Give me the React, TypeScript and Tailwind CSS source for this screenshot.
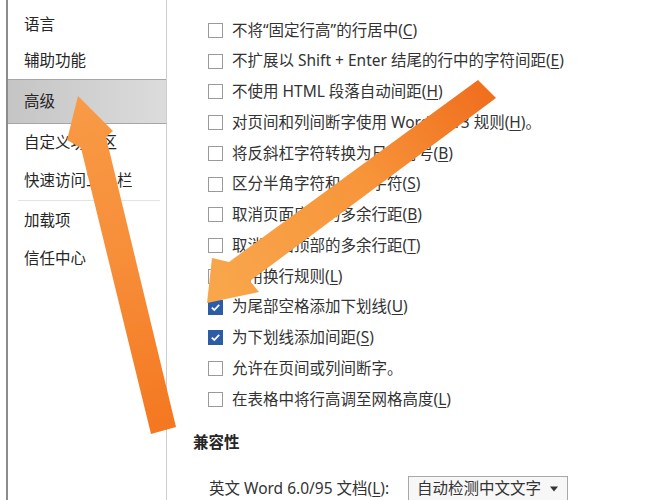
import React from "react";

const FONT = '"Noto Sans", "Noto Sans CJK SC", sans-serif';

type Row = { pre: string; key?: string; post?: string; checked?: boolean };

const rows: Row[] = [
  { pre: "不将“固定行高”的行居中(", key: "C", post: ")" },
  { pre: "不扩展以 Shift + Enter 结尾的行中的字符间距(", key: "E", post: ")" },
  { pre: "不使用 HTML 段落自动间距(", key: "H", post: ")" },
  { pre: "对页间和列间断字使用 Word 2013 规则(", key: "H", post: ")。" },
  { pre: "将反斜杠字符转换为日元符号(", key: "B", post: ")" },
  { pre: "区分半角字符和全角字符(", key: "S", post: ")" },
  { pre: "取消页面底部的多余行距(", key: "B", post: ")" },
  { pre: "取消页面顶部的多余行距(", key: "T", post: ")" },
  { pre: "使用换行规则(", key: "L", post: ")" },
  { pre: "为尾部空格添加下划线(", key: "U", post: ")", checked: true },
  { pre: "为下划线添加间距(", key: "S", post: ")", checked: true },
  { pre: "允许在页间或列间断字。" },
  { pre: "在表格中将行高调至网格高度(", key: "L", post: ")" },
];

function Checkbox({ checked }: { checked?: boolean }) {
  if (checked) {
    return (
      <div className="w-[15px] h-[15px] shrink-0 bg-[#2d5ca6] border border-[#2d5ca6] flex items-center justify-center">
        <svg width="11" height="11" viewBox="0 0 11 11">
          <path d="M1.8 5.6 L4.3 8 L9.2 2.8" fill="none" stroke="#ffffff" strokeWidth="1.8" />
        </svg>
      </div>
    );
  }
  return <div className="w-[15px] h-[15px] shrink-0 bg-white border border-[#9a9a9a]" />;
}

function SideItem({ label, h, selected }: { label: string; h: string; selected?: boolean }) {
  return (
    <div
      className={
        selected
          ? `${h} flex items-center pl-[16px] bg-gradient-to-r from-[#c5c5c5] to-[#dcdcdc] border-y border-[#a6a6a6]`
          : `${h} flex items-center pl-[16px]`
      }
    >
      <span className="text-[15.5px] text-[#262626] leading-none">{label}</span>
    </div>
  );
}

export default function App() {
  return (
    <div
      className="relative w-[655px] h-[500px] overflow-hidden bg-white flex"
      style={{ fontFamily: FONT }}
    >
      <div className="w-[6px] shrink-0" />
      <div className="w-[2px] shrink-0 bg-[#8c8c8c]" />
      <div className="w-[159px] shrink-0 border-r border-[#cdcdcd] flex flex-col pt-[7px]">
        <SideItem label="语言" h="h-[36px]" />
        <SideItem label="辅助功能" h="h-[36px]" />
        <SideItem label="高级" h="h-[45px]" selected />
        <SideItem label="自定义功能区" h="h-[38px]" />
        <SideItem label="快速访问工具栏" h="h-[38px]" />
        <div className="h-px bg-[#e3e3e3] ml-[10px] mr-[6px]" />
        <SideItem label="加载项" h="h-[40px]" />
        <SideItem label="信任中心" h="h-[36px]" />
      </div>
      <div className="flex-1 flex flex-col pl-[26px]">
        <div className="mt-[7px] h-px bg-[#ececec]" />
        <div className="mt-[8px] flex flex-col">
          {rows.map((r, i) => (
            <div key={i} className="h-[30.75px] flex items-center pl-[15px] gap-[9px]">
              <Checkbox checked={r.checked} />
              <span className="text-[15.5px] text-[#333333] whitespace-nowrap leading-none">
                {r.pre}
                {r.key && <span className="underline underline-offset-2">{r.key}</span>}
                {r.post}
              </span>
            </div>
          ))}
        </div>
        <div className="mt-[17px] h-[22px] flex items-center">
          <span className="text-[15.5px] font-bold text-[#262626]">兼容性</span>
        </div>
        <div className="mt-[11px] h-px bg-[#e3e3e3]" />
        <div className="mt-[11px] h-[26px] flex items-center pl-[16px]">
          <span className="w-[199px] shrink-0 text-[15.5px] text-[#333333] whitespace-nowrap">
            英文 Word 6.0/95 文档(<span className="underline underline-offset-2">L</span>):
          </span>
          <div className="w-[160px] h-[26px] shrink-0 border border-[#a8a8a8] bg-[#f7f7f7] flex items-center pl-[8px] pr-[8px] justify-between">
            <span className="text-[15.5px] text-[#333333] whitespace-nowrap">自动检测中文文字</span>
            <svg width="10" height="6" viewBox="0 0 10 6">
              <path d="M1 0.5 L9 0.5 L5 5.5 Z" fill="#333333" />
            </svg>
          </div>
        </div>
      </div>

      <svg
        className="absolute left-0 top-0 pointer-events-none"
        width="655"
        height="500"
        viewBox="0 0 655 500"
      >
        <defs>
          <linearGradient id="g1" gradientUnits="userSpaceOnUse" x1="163" y1="432" x2="80" y2="100">
            <stop offset="0" stopColor="#f47720" />
            <stop offset="0.5" stopColor="#f78d38" />
            <stop offset="1" stopColor="#f89a46" />
          </linearGradient>
          <linearGradient id="g2" gradientUnits="userSpaceOnUse" x1="488" y1="89" x2="215" y2="290">
            <stop offset="0" stopColor="#f06e1e" />
            <stop offset="0.45" stopColor="#f7953a" />
            <stop offset="1" stopColor="#f9a64c" />
          </linearGradient>
          <filter id="soft" x="-10%" y="-10%" width="120%" height="120%">
            <feGaussianBlur stdDeviation="0.6" />
          </filter>
        </defs>
        <polygon
          points="78,96 113,131 106,137 176,427 151,434 81,148 67,140"
          fill="url(#g1)"
          filter="url(#soft)"
        />
        <polygon
          points="478,80 496,98 250,281 259,292 207,303 212,258 229,262"
          fill="url(#g2)"
          filter="url(#soft)"
        />
      </svg>
    </div>
  );
}
